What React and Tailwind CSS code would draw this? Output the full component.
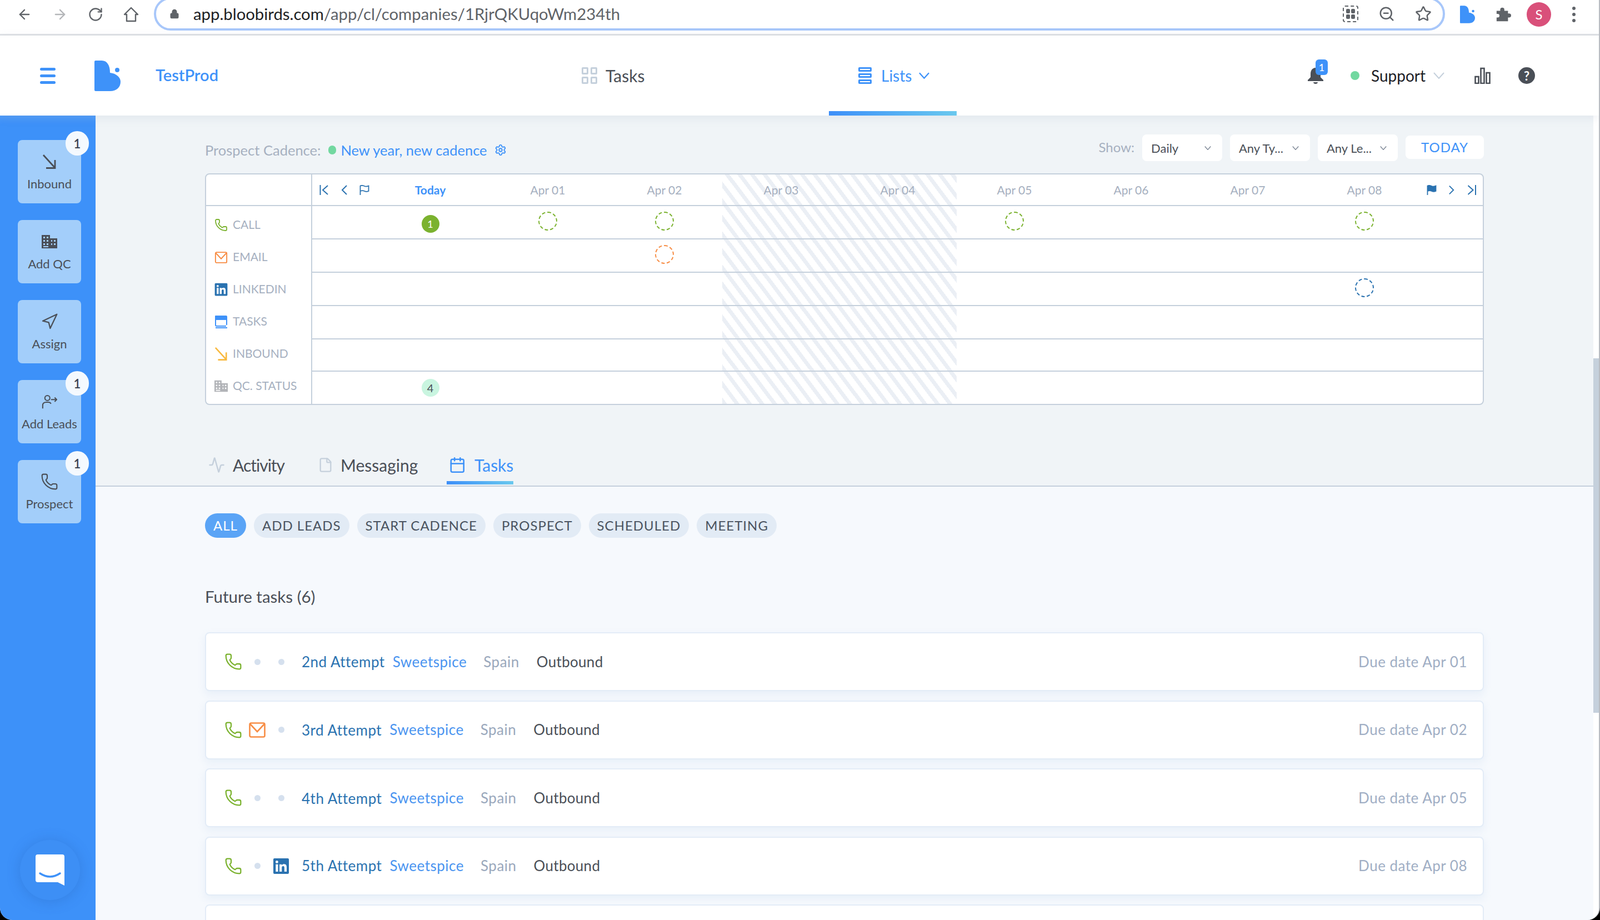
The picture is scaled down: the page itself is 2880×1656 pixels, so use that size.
import React from "react";
import { ArrowLeft, ArrowRight, RotateCw, Lock, Star, ZoomOut, Phone, Navigation, Settings, Activity, File, Calendar } from "lucide-react";
import { FaLinkedin } from "react-icons/fa";

const Logo = ({ className }) => (
  <svg viewBox="0 0 47 55" className={className}>
    <path d="M0 2Q0 0 2 0H13C23 0 28 9 28 22C39 23 47 30 47 38C47 48 40 55 28 55H2Q0 55 0 53Z" fill="#3e92f9" />
    <circle cx="41" cy="17" r="4" fill="#3e92f9" />
  </svg>
);

const Chev = ({ className, color, sw = 2 }) => (
  <svg viewBox="0 0 20 12" className={className} fill="none" stroke={color} strokeWidth={sw}><path d="M1 1L10 11L19 1" /></svg>
);

const InboundIcon = ({ className, color = "#4a4f57" }) => (
  <svg viewBox="0 0 26 26" className={className} fill="none" stroke={color} strokeWidth="2.8">
    <path d="M2 1L22 23M23 10V24.5H7" />
  </svg>
);

const MailIcon = ({ className }) => (
  <svg viewBox="0 0 30 28" className={className} fill="none" stroke="#f78d45" strokeWidth="2.6">
    <rect x="1.5" y="1.5" width="27" height="25" rx="2.5" />
    <path d="M2 3L15 17L28 3" />
  </svg>
);

const BuildingIcon = ({ className, color = "#4a4f57" }) => (
  <svg viewBox="0 0 28 24" className={className}>
    <path fillRule="evenodd" fill={color} d="M0 0H15V6H28V24H0ZM3 3V6H6V3ZM9 3V6H12V3ZM3 9V12H6V9ZM9 9V12H12V9ZM3 15V18H6V15ZM9 15V18H12V15ZM3 20V22H12V20ZM17 9V12H19V9ZM22 9V12H25V9ZM17 15V18H19V15ZM22 15V18H25V15Z" />
  </svg>
);

const AddLeadsIcon = ({ className }) => (
  <svg viewBox="0 0 30 26" className={className} fill="none" stroke="#4a4f57" strokeWidth="2.2">
    <circle cx="11" cy="6" r="4.8" />
    <path d="M2 26V20C2 16 5 14 9 14H13C15 14 17 15 18 17M18 9H29M25 5L29 9L25 13" />
  </svg>
);

const First = () => (
  <svg viewBox="0 0 16 18" className="w-[16px] h-[18px]" fill="none" stroke="#2a72b0" strokeWidth="2"><path d="M1.5 0V18M15 1L6 9L15 17" /></svg>
);
const Prev = () => (
  <svg viewBox="0 0 13 18" className="w-[13px] h-[18px]" fill="none" stroke="#2a72b0" strokeWidth="2"><path d="M11 1L3 9L11 17" /></svg>
);
const Next = () => (
  <svg viewBox="0 0 13 18" className="w-[12px] h-[18px]" fill="none" stroke="#2a72b0" strokeWidth="2"><path d="M2 1L10 9L2 17" /></svg>
);
const Last = () => (
  <svg viewBox="0 0 16 18" className="w-[17px] h-[18px]" fill="none" stroke="#2a72b0" strokeWidth="2"><path d="M14.5 0V18M1 1L10 9L1 17" /></svg>
);
const Flag = ({ filled }) => (
  <svg viewBox="0 0 18 18" className="w-[18px] h-[18px]" fill={filled ? "#2a72b0" : "none"} stroke="#2a72b0" strokeWidth="1.8">
    <path d="M1.5 18V1.5C5 0 7 1 9 2C11 3 13 3 16.5 1.5V11C13 12.5 11 12 9 11C7 10 5 9.5 1.5 11" />
  </svg>
);

const TasksRowIcon = () => (
  <svg viewBox="0 0 24 24" className="w-[24px] h-[24px]">
    <path d="M1 2Q1 1 2 1H21Q23 1 23 3V9H1Z" fill="#3e92f9" />
    <path d="M2 8V18Q2 20 4 20H21M22 8V18" fill="none" stroke="#3e92f9" strokeWidth="2" />
    <path d="M2 23H23" stroke="#3e92f9" strokeWidth="1.8" />
  </svg>
);

const HomeOutline = () => (
  <svg viewBox="0 0 28 28" className="w-[28px] h-[28px]" fill="none" stroke="#5f6368" strokeWidth="2.4" strokeLinejoin="round">
    <path d="M14 2L2 14H6V26H22V14H26Z" />
  </svg>
);

const Puzzle = () => (
  <svg viewBox="0 0 30 30" className="w-[28px] h-[28px]" fill="#5f6368">
    <path d="M2 8H9V6a4 4 0 0 1 8 0V8H24V13H26a4 4 0 0 1 0 8H24V28H2V21H4a3.5 3.5 0 0 0 0-7H2Z" />
  </svg>
);

const Dashed = ({ c }) => <div className={`w-[34px] h-[34px] rounded-full border-2 border-dashed ${c} -mt-[5px]`} />;

const sideItems = [
  { label: "Inbound", badge: true, icon: <InboundIcon className="w-[26px] h-[26px]" /> },
  { label: "Add QC", icon: <BuildingIcon className="w-[28px] h-[24px]" /> },
  { label: "Assign", icon: <Navigation className="w-[32px] h-[32px] text-[#4a4f57]" strokeWidth={1.7} /> },
  { label: "Add Leads", badge: true, icon: <AddLeadsIcon className="w-[28px] h-[26px]" /> },
  { label: "Prospect", badge: true, icon: <Phone className="w-[32px] h-[32px] text-[#4a4f57]" strokeWidth={1.6} /> },
];

const labels = [
  { t: "CALL", i: <Phone className="w-[28px] h-[28px] text-[#7bb22f]" strokeWidth={1.8} /> },
  { t: "EMAIL", i: <MailIcon className="w-[24px] h-[21px]" /> },
  { t: "LINKEDIN", i: <FaLinkedin className="w-[26px] h-[26px] text-[#2a72b0]" /> },
  { t: "TASKS", i: <TasksRowIcon /> },
  { t: "INBOUND", i: <InboundIcon className="w-[24px] h-[24px]" color="#f8b93f" /> },
  { t: "QC. STATUS", i: <BuildingIcon className="w-[24px] h-[22px]" color="#b2b4b8" /> },
];

const days = ["Today", "Apr 01", "Apr 02", "Apr 03", "Apr 04", "Apr 05", "Apr 06", "Apr 07", "Apr 08"];

const rows = [
  { h: "h-[60px]", marks: { 0: <div className="mt-[6px] -ml-[3px] w-[32px] h-[32px] rounded-full bg-[#7bb22f] text-white text-[18px] flex items-center justify-center">1</div>, 1: <Dashed c="border-[#7bb22f]" />, 2: <Dashed c="border-[#7bb22f]" />, 5: <Dashed c="border-[#7bb22f]" />, 8: <Dashed c="border-[#7bb22f]" /> } },
  { h: "h-[60px]", marks: { 2: <Dashed c="border-[#f78d45]" /> } },
  { h: "h-[60px]", marks: { 8: <Dashed c="border-[#2a72b0]" /> } },
  { h: "h-[60px]", marks: {} },
  { h: "h-[58px]", marks: {} },
  { h: "h-[58px]", marks: { 0: <div className="-ml-[3px] w-[32px] h-[32px] rounded-full bg-[#c9f5e0] text-[#4a4f57] text-[20px] flex items-center justify-center">4</div> } },
];

const tasks = [
  { a: "2nd Attempt", d: "Due date Apr 01", mail: false, li: false, mt: "" },
  { a: "3rd Attempt", d: "Due date Apr 02", mail: true, li: false, mt: "mt-[2px]" },
  { a: "4th Attempt", d: "Due date Apr 05", mail: false, li: false, mt: "mt-[2px]" },
  { a: "5th Attempt", d: "Due date Apr 08", mail: false, li: true, mt: "" },
];

const Dot = () => <div className="w-[11px] h-[11px] rounded-full bg-[#d5e0ee]" />;

const Select = ({ t }) => (
  <div className="w-[144px] h-[48px] rounded-lg bg-white flex items-center justify-between pl-[16px] pr-[20px] text-[22px] text-[#4a4f57]">
    <span>{t}</span>
    <Chev className="w-[12px] h-[7px]" color="#7b8594" sw={2.4} />
  </div>
);

export default function App() {
  return (
    <div className="w-[2880px] h-[1656px] bg-black font-[Lato,sans-serif]">
      <div className="w-full h-full rounded-b-[22px] overflow-hidden bg-white flex flex-col border-r-2 border-[#b8bcc2]">
        {/* browser bar */}
        <div className="h-[64px] shrink-0 border-b-[3px] border-[#dfe1e5] overflow-hidden flex items-start pl-[30px] pr-[36px] text-[#5f6368]">
          <div className="flex items-center gap-[36px] h-[52px]">
            <ArrowLeft className="w-[28px] h-[28px]" strokeWidth={2} />
            <ArrowRight className="w-[28px] h-[28px] text-[#b4b6b9]" strokeWidth={2} />
            <RotateCw className="w-[28px] h-[28px]" strokeWidth={2} />
            <HomeOutline />
          </div>
          <div className="ml-[27px] -mt-[5px] w-[2324px] h-[60px] shrink-0 rounded-[30px] border-[4px] border-[#a8c7fa] flex items-center pl-[24px] pr-[20px]">
            <Lock className="w-[18px] h-[22px] text-[#5f6368] fill-[#5f6368]" strokeWidth={2} />
            <div className="ml-[25px] text-[29.3px] font-['Liberation_Sans',sans-serif] text-[#5f6368]"><span className="text-[#202124]">app.bloobirds.com</span>/app/cl/companies/1RjrQKUqoWm234th</div>
            <div className="ml-auto flex items-center gap-[36px]">
              <div className="w-[28px] h-[30px] border-2 border-dashed border-[#5f6368] rounded-[4px] p-[4px] grid grid-cols-2 gap-[2px]">
                <div className="bg-[#5f6368] rounded-[2px]" /><div className="bg-[#5f6368] rounded-[2px]" /><div className="bg-[#5f6368] rounded-[2px]" /><div className="bg-[#5f6368] rounded-[2px]" />
              </div>
              <ZoomOut className="w-[30px] h-[30px]" strokeWidth={2} />
              <Star className="w-[30px] h-[30px]" strokeWidth={2} />
            </div>
          </div>
          <div className="flex items-center h-[52px] ml-[27px]">
            <Logo className="w-[27px] h-[32px]" />
            <div className="ml-[37px]"><Puzzle /></div>
            <div className="ml-[28px] w-[44px] h-[44px] rounded-full bg-[#d9507a] text-white text-[24px] flex items-center justify-center font-['Liberation_Sans',sans-serif]">S</div>
            <div className="ml-[38px] flex flex-col gap-[5px]">
              <div className="w-[6px] h-[6px] rounded-full bg-[#5f6368]" /><div className="w-[6px] h-[6px] rounded-full bg-[#5f6368]" /><div className="w-[6px] h-[6px] rounded-full bg-[#5f6368]" />
            </div>
          </div>
        </div>

        {/* app header */}
        <div className="h-[144px] shrink-0 relative z-10 bg-white flex items-center shadow-[0_4px_16px_rgba(130,150,175,0.14)]">
          <div className="ml-[72px] w-[28px] flex flex-col gap-[7px]">
            <div className="h-[5px] rounded-full bg-[#3e92f9]" /><div className="h-[5px] rounded-full bg-[#3e92f9]" /><div className="h-[5px] rounded-full bg-[#3e92f9]" />
          </div>
          <Logo className="ml-[70px] w-[47px] h-[55px]" />
          <div className="ml-[63px] w-[112px] text-[29px] leading-[34px] -mt-[2px] font-semibold text-[#3e92f9]">TestProd</div>
          <div className="ml-[655px] w-[113px] flex items-center">
            <div className="grid grid-cols-2 gap-[4px] w-[28px] h-[30px] shrink-0">
              <div className="border-[3px] border-[#c5d0dc] rounded-[2px]" /><div className="border-[3px] border-[#c5d0dc] rounded-[2px]" /><div className="border-[3px] border-[#c5d0dc] rounded-[2px]" /><div className="border-[3px] border-[#c5d0dc] rounded-[2px]" />
            </div>
            <div className="ml-[15px] text-[30px] text-[#4a4f57]">Tasks</div>
          </div>
          <div className="ml-[332px] w-[230px] h-full relative flex items-center pl-[53px]">
            <div className="absolute left-0 right-0 bottom-0 h-[8px] bg-gradient-to-r from-[#3e8ff8] to-[#6ac8ee]" />
            <div className="flex flex-col gap-[3px] w-[24px] shrink-0">
              <div className="h-[8px] border-[3px] border-[#3e92f9] rounded-[2px]" /><div className="h-[8px] border-[3px] border-[#3e92f9] rounded-[2px]" /><div className="h-[8px] border-[3px] border-[#3e92f9] rounded-[2px]" />
            </div>
            <div className="ml-[17px] text-[28px] text-[#3e92f9]">Lists</div>
            <Chev className="ml-[13px] w-[19px] h-[12px]" color="#3e92f9" sw={2.4} />
          </div>
          <div className="ml-[631px] relative w-[30px] h-[30px]">
            <svg viewBox="0 0 30 30" className="w-[30px] h-[30px]" fill="#4a4f57"><path d="M15 1C9 1 6 6 6 12V18L1 23V25H29V23L24 18V12C24 6 21 1 15 1ZM11 27H19C19 29 17 30 15 30C13 30 11 29 11 27Z" /></svg>
            <div className="absolute left-[15px] -top-[14px] w-[22px] h-[28px] rounded-md bg-[#3e92f9] text-white text-[18px] flex items-center justify-center">1</div>
          </div>
          <div className="ml-[48px] w-[16px] h-[16px] rounded-full bg-[#72d8a0]" />
          <div className="ml-[21px] w-[101px] text-[28px] text-[#1d2026]">Support</div>
          <Chev className="ml-[11px] w-[20px] h-[12px]" color="#c5d0dc" />
          <svg viewBox="0 0 29 30" className="ml-[54px] w-[29px] h-[30px]" fill="none" stroke="#4a4f57" strokeWidth="2.6"><rect x="1.5" y="17" width="6" height="12" /><rect x="11.5" y="2" width="6" height="27" /><rect x="21.5" y="10" width="6" height="19" /></svg>
          <div className="ml-[50px] w-[30px] h-[30px] rounded-full bg-[#4a4f57] text-white text-[22px] font-bold flex items-center justify-center">?</div>
        </div>

        {/* body */}
        <div className="flex-1 flex min-h-0">
          {/* sidebar */}
          <div className="w-[172px] shrink-0 bg-[#3d91f9] flex flex-col pt-[44px] pl-[32px] gap-[30px] shadow-[inset_0_14px_12px_-8px_rgba(255,255,255,0.1)]">
            {sideItems.map((s) => (
              <div key={s.label} className="relative w-[114px] h-[114px] rounded-lg bg-[#a3cefa] flex flex-col items-center pt-[24px]">
                {s.badge && <div className="absolute -top-[16px] -right-[14px] w-[42px] h-[44px] rounded-full bg-[#f4f9fe] text-[#3a4250] text-[22px] font-semibold flex items-center justify-center">1</div>}
                <div className="h-[30px] flex items-center justify-center">{s.icon}</div>
                <div className="mt-[12px] text-[22px] leading-[26px] text-[#4a4f57] whitespace-nowrap">{s.label}</div>
              </div>
            ))}
            <div className="mt-auto mb-[36px] ml-[4px] w-[108px] h-[108px] rounded-full bg-[#3d8ff5] shadow-[0_2px_24px_rgba(30,80,160,0.25)] flex items-center justify-center">
              <svg viewBox="0 0 52 56" className="w-[52px] h-[56px]">
                <path d="M4 0H48Q52 0 52 4V56L40 50H4Q0 50 0 46V4Q0 0 4 0Z" fill="#fff" />
                <path d="M8 34Q26 46 44 34" fill="none" stroke="#3e92f9" strokeWidth="3.5" strokeLinecap="round" />
              </svg>
            </div>
          </div>

          {/* main */}
          <div className="flex-1 min-w-0 flex flex-col">
            <div className="bg-[#f0f4f7] border-b-2 border-[#c5d0dc] px-[197px] pt-[34px] h-[668px] shrink-0">
              <div className="flex items-start h-[48px]">
                <div className="flex items-center h-[56px] text-[25.5px]">
                  <span className="text-[#a6b0c0]">Prospect Cadence:</span>
                  <div className="ml-[14px] w-[14px] h-[16px] rounded-full bg-[#72d8a0]" />
                  <span className="ml-[8px] text-[#3e92f9]">New year, new cadence</span>
                  <Settings className="ml-[13px] w-[22px] h-[22px] text-[#3e92f9]" strokeWidth={2} />
                </div>
                <div className="ml-auto flex items-start gap-[14px]">
                  <span className="text-[24px] text-[#a6b0c0] leading-[46px]">Show:</span>
                  <Select t="Daily" />
                  <Select t="Any Ty..." />
                  <Select t="Any Le..." />
                  <div className="mt-[2px] w-[141px] h-[42px] rounded-lg bg-white text-[#3e92f9] text-[24px] tracking-[1px] flex items-center justify-center">TODAY</div>
                </div>
              </div>
              <div className="mt-[22px] h-[417px] rounded-lg border-2 border-[#c5d0dc] bg-white flex overflow-hidden">
                <div className="w-[191px] shrink-0 border-r-2 border-[#c5d0dc]">
                  <div className="h-[57px] border-b-2 border-[#c5d0dc]" />
                  <div className="pt-[5px]">
                    {labels.map((l) => (
                      <div key={l.t} className="h-[58px] flex items-center pl-[15px] gap-[9px]">
                        <div className="w-[24px] flex justify-center shrink-0">{l.i}</div>
                        <span className="text-[21px] text-[#a6b0c0] -mt-[3px]">{l.t}</span>
                      </div>
                    ))}
                  </div>
                </div>
                <div className="flex-1 relative min-w-0">
                  <div className="absolute left-[738px] top-0 bottom-0 w-[422px] bg-[repeating-linear-gradient(53deg,#ebeff5_0,#ebeff5_7px,#ffffff_7px,#ffffff_18px)]" />
                  <div className="relative h-[57px] border-b-2 border-[#c5d0dc] flex items-center">
                    <div className="w-[109px] flex items-center pl-[13px]">
                      <First />
                      <div className="ml-[22px]"><Prev /></div>
                      <div className="ml-[21px]"><Flag /></div>
                    </div>
                    {days.map((d, i) => (
                      <div key={d} className={`w-[210px] text-center text-[21px] ${i === 0 ? "font-bold text-[#3e92f9] pr-[3px]" : "text-[#a6b0c0]"}`}>{d}</div>
                    ))}
                    <div className="flex items-center pl-[7px]">
                      <Flag filled />
                      <div className="ml-[21px]"><Next /></div>
                      <div className="ml-[22px]"><Last /></div>
                    </div>
                  </div>
                  {rows.map((r, idx) => (
                    <div key={idx} className={`relative ${r.h} ${idx < 5 ? "border-b-2 border-[#c5d0dc]" : ""} flex items-center pl-[109px]`}>
                      {days.map((d, i) => (
                        <div key={d} className="w-[210px] flex justify-center">{r.marks[i] || null}</div>
                      ))}
                    </div>
                  ))}
                </div>
              </div>
              <div className="mt-[73px] h-[70px] flex items-stretch">
                <div className="flex items-center ml-[6px]">
                  <Activity className="w-[30px] h-[30px] text-[#c5d0dc]" strokeWidth={2} />
                  <span className="ml-[14px] text-[30px] tracking-[-1px] text-[#4a4f57]">Activity</span>
                </div>
                <div className="flex items-center ml-[60px]">
                  <File className="w-[28px] h-[34px] text-[#c5d0dc]" strokeWidth={2} />
                  <span className="ml-[13px] text-[30px] text-[#4a4f57]">Messaging</span>
                </div>
                <div className="relative flex items-center ml-[52px] pl-[4px] w-[120px]">
                  <Calendar className="w-[32px] h-[36px] text-[#3e92f9]" strokeWidth={2} />
                  <span className="ml-[15px] text-[30px] text-[#3e92f9]">Tasks</span>
                  <div className="absolute left-0 right-0 bottom-0 h-[6px] bg-gradient-to-r from-[#3e8ff8] to-[#6ac8ee]" />
                </div>
              </div>
            </div>

            <div className="flex-1 min-h-0 overflow-hidden bg-[#f6f9fd] px-[197px] pt-[48px]">
              <div className="flex gap-[14px]">
                {["ALL", "ADD LEADS", "START CADENCE", "PROSPECT", "SCHEDULED", "MEETING"].map((p, i) => (
                  <div key={p} className={`h-[44px] px-[15px] rounded-full flex items-center text-[24px] tracking-[1px] ${i === 0 ? "bg-[#5aa4f6] text-white" : "bg-[#e2ebf5] text-[#4a5360]"}`}>{p}</div>
                ))}
              </div>
              <div className="mt-[89px] text-[29.5px] leading-[34px] text-[#4a4f57]">Future tasks (6)</div>
              <div className="mt-[47px] flex flex-col gap-[16.6px]">
                {tasks.map((t) => (
                  <div key={t.a} className="h-[106px] shrink-0 rounded-lg border-2 border-[#e3ecf7] bg-white shadow-[0_6px_14px_rgba(200,218,240,0.3)] flex items-center pl-[34px] pr-[28px] text-[26px] tracking-[0.5px]">
                    <div className="w-[30px] flex justify-center"><Phone className="w-[32px] h-[32px] shrink-0 text-[#7bb22f]" strokeWidth={1.7} /></div>
                    <div className="ml-[13px] w-[30px] flex justify-center">{t.mail ? <MailIcon className="w-[30px] h-[28px]" /> : <Dot />}</div>
                    <div className="ml-[13px] w-[30px] flex justify-center">{t.li ? <FaLinkedin className="w-[32px] h-[32px] shrink-0 text-[#2a72b0]" /> : <Dot />}</div>
                    <span className={`ml-[22px] text-[#2a72b0] ${t.mt}`}>{t.a}</span>
                    <span className="ml-[14px] text-[#4a94f0]">Sweetspice</span>
                    <span className="ml-[30px] text-[#9aa8bc]">Spain</span>
                    <span className="ml-[31px] text-[#4a4f57] tracking-[0.3px]">Outbound</span>
                    <span className="ml-auto text-[#a0aec4]">{t.d}</span>
                  </div>
                ))}
                <div className="h-[106px] shrink-0 rounded-lg border-2 border-[#e3ecf7] bg-white" />
              </div>
            </div>
          </div>

          {/* scrollbar */}
          <div className="w-[10px] shrink-0 bg-white">
            <div className="mt-[437px] h-[638px] bg-[#c5d0dc]" />
          </div>
        </div>
      </div>
    </div>
  );
}
